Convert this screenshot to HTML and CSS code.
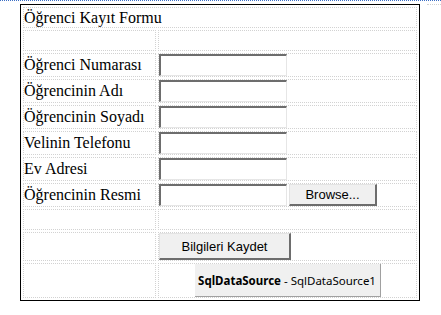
FILE: index.html
```html
<!DOCTYPE html>
<html lang="tr">
<head>
  <meta charset="UTF-8">
  <title>Öğrenci Kayıt Formu</title>
  <link rel="stylesheet" href="styles.css">
</head>
<body>

<div class="design-surface">
  <!-- form alanı -->
  <div class="form-box">
    <table class="form-table">
      <tr class="row-title">
        <td colspan="2">Öğrenci Kayıt Formu</td>
      </tr>
      <tr class="row-blank">
        <td class="label"></td>
        <td></td>
      </tr>
      <tr class="row-field">
        <td class="label">Öğrenci Numarası</td>
        <td><input type="text" class="txt"></td>
      </tr>
      <tr class="row-field">
        <td class="label">Öğrencinin Adı</td>
        <td><input type="text" class="txt"></td>
      </tr>
      <tr class="row-field">
        <td class="label">Öğrencinin Soyadı</td>
        <td><input type="text" class="txt"></td>
      </tr>
      <tr class="row-field">
        <td class="label">Velinin Telefonu</td>
        <td><input type="text" class="txt"></td>
      </tr>
      <tr class="row-field">
        <td class="label">Ev Adresi</td>
        <td><input type="text" class="txt"></td>
      </tr>
      <tr class="row-field">
        <td class="label">Öğrencinin Resmi</td>
        <td>
          <div class="file-row">
            <input type="text" class="txt">
            <button type="button" class="btn btn-browse">Browse...</button>
          </div>
        </td>
      </tr>
      <tr class="row-gap">
        <td class="label"></td>
        <td></td>
      </tr>
      <tr class="row-action">
        <td class="label"></td>
        <td><button type="button" class="btn btn-save">Bilgileri Kaydet</button></td>
      </tr>
      <tr class="row-source">
        <td class="label"></td>
        <td>
          <div class="datasource"><b>SqlDataSource</b> - SqlDataSource1</div>
        </td>
      </tr>
    </table>
  </div>
  <div class="surface-edge"></div>
</div>

</body>
</html>
```

FILE: styles.css
```css
/* === 全体 === */
body {
  margin: 0;
  background: #fff;
  font-family: "Liberation Serif", "Times New Roman", serif;
  font-size: 16px;
  color: #000;
}

/* デザイン面（上の青い点線） */
.design-surface {
  display: flex;
  align-items: flex-start;
  border-top: 1px dotted #3d6fc4;
  padding: 3px 0 0 20px;
}

.form-box {
  width: 398px;
  border: 1px solid #000;
}

.surface-edge {
  flex: 1;
  margin-left: 7px;
  border-top: 1px dotted #d2d2d2;
}

/* === テーブル === */
.form-table {
  width: 398px;
  border-collapse: separate;
  border-spacing: 2px;
}

.form-table td {
  box-sizing: border-box;
  border: 1px dotted #d2d2d2;
  padding: 0;
  vertical-align: middle;
  white-space: nowrap;
}

.form-table td.label {
  width: 133px;
}

.row-title td  { height: 21px; }
.row-blank td  { height: 21px; }
.row-field td  { height: 24px; }
.row-gap td    { height: 21px; }
.row-action td { height: 29px; }
.row-source td { height: 34px; }

/* === 入力欄 === */
.txt {
  display: block;
  box-sizing: border-box;
  width: 128px;
  height: 22px;
  margin: 0;
  padding: 0;
  background: #fff;
  border-style: solid;
  border-width: 2px 1px 1px 2px;
  border-color: #6d6d6d #e6e6e6 #e6e6e6 #6d6d6d;
}

.file-row {
  display: flex;
  align-items: center;
  gap: 2px;
}

/* === ボタン === */
.btn {
  display: block;
  box-sizing: border-box;
  margin: 0;
  padding: 0;
  background: #f0f0f0;
  font-family: "Liberation Sans", Arial, sans-serif;
  font-size: 13px;
  color: #000;
  border-style: solid;
  border-width: 1px 2px 2px 1px;
  border-color: #e3e3e3 #6d6d6d #6d6d6d #e3e3e3;
}

.btn-browse {
  width: 88px;
  height: 22px;
}

.btn-save {
  width: 132px;
  height: 27px;
}

/* === SqlDataSource === */
.datasource {
  box-sizing: border-box;
  width: 186px;
  height: 33px;
  margin: 0 auto;
  display: flex;
  align-items: center;
  justify-content: center;
  background: #f0f0f0;
  border-right: 1px solid #a0a0a0;
  border-bottom: 1px solid #a0a0a0;
  font-family: "Noto Sans", "Liberation Sans", sans-serif;
  font-size: 11.5px;
  white-space: pre;
}
```
